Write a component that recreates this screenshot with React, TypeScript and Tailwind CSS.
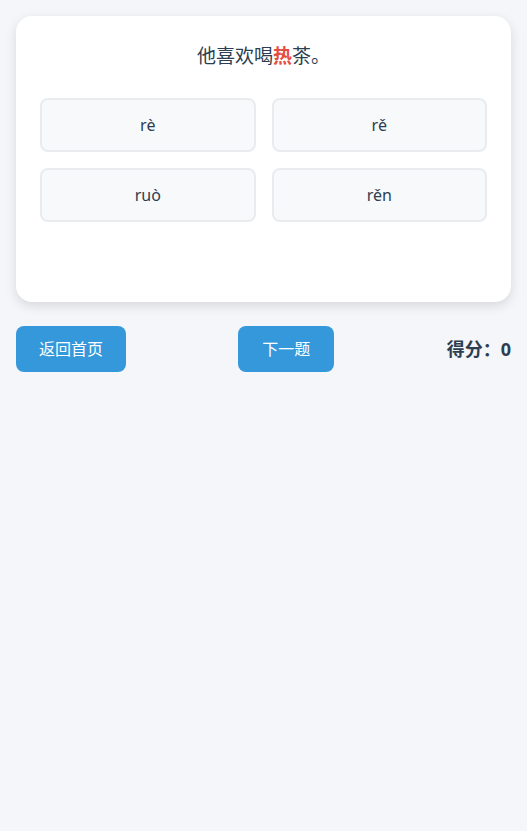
import React from "react";

const options = ["rè", "rě", "ruò", "rěn"];

export default function App() {
  return (
    <div
      className="min-h-[831px] w-full bg-[#f4f6f9] p-4 text-[#2c3e50]"
      style={{ fontFamily: '"Noto Sans", "Noto Sans CJK SC", sans-serif' }}
    >
      <div className="rounded-2xl bg-white p-6 shadow-[0_4px_12px_rgba(0,0,0,0.12)]">
        <div className="mb-[25px] text-center text-[19px] leading-[33px]">
          他喜欢喝<span className="font-bold text-[#e74c3c]">热</span>茶。
        </div>
        <div className="grid grid-cols-2 gap-4">
          {options.map((o) => (
            <button
              key={o}
              className="h-[54px] rounded-lg border-2 border-[#e9ecef] bg-[#f8f9fa] text-[16px] text-[#2c3e50]"
            >
              {o}
            </button>
          ))}
        </div>
        <div className="h-[56px]" />
      </div>
      <div className="mt-6 flex items-center justify-between">
        <button className="h-[46px] rounded-lg bg-[#3498db] px-[23px] text-[16px] text-white">
          返回首页
        </button>
        <button className="h-[46px] rounded-lg bg-[#3498db] px-[24px] text-[16px] text-white">
          下一题
        </button>
        <div className="text-[18px] font-bold text-[#2c3e50]">得分：0</div>
      </div>
    </div>
  );
}
